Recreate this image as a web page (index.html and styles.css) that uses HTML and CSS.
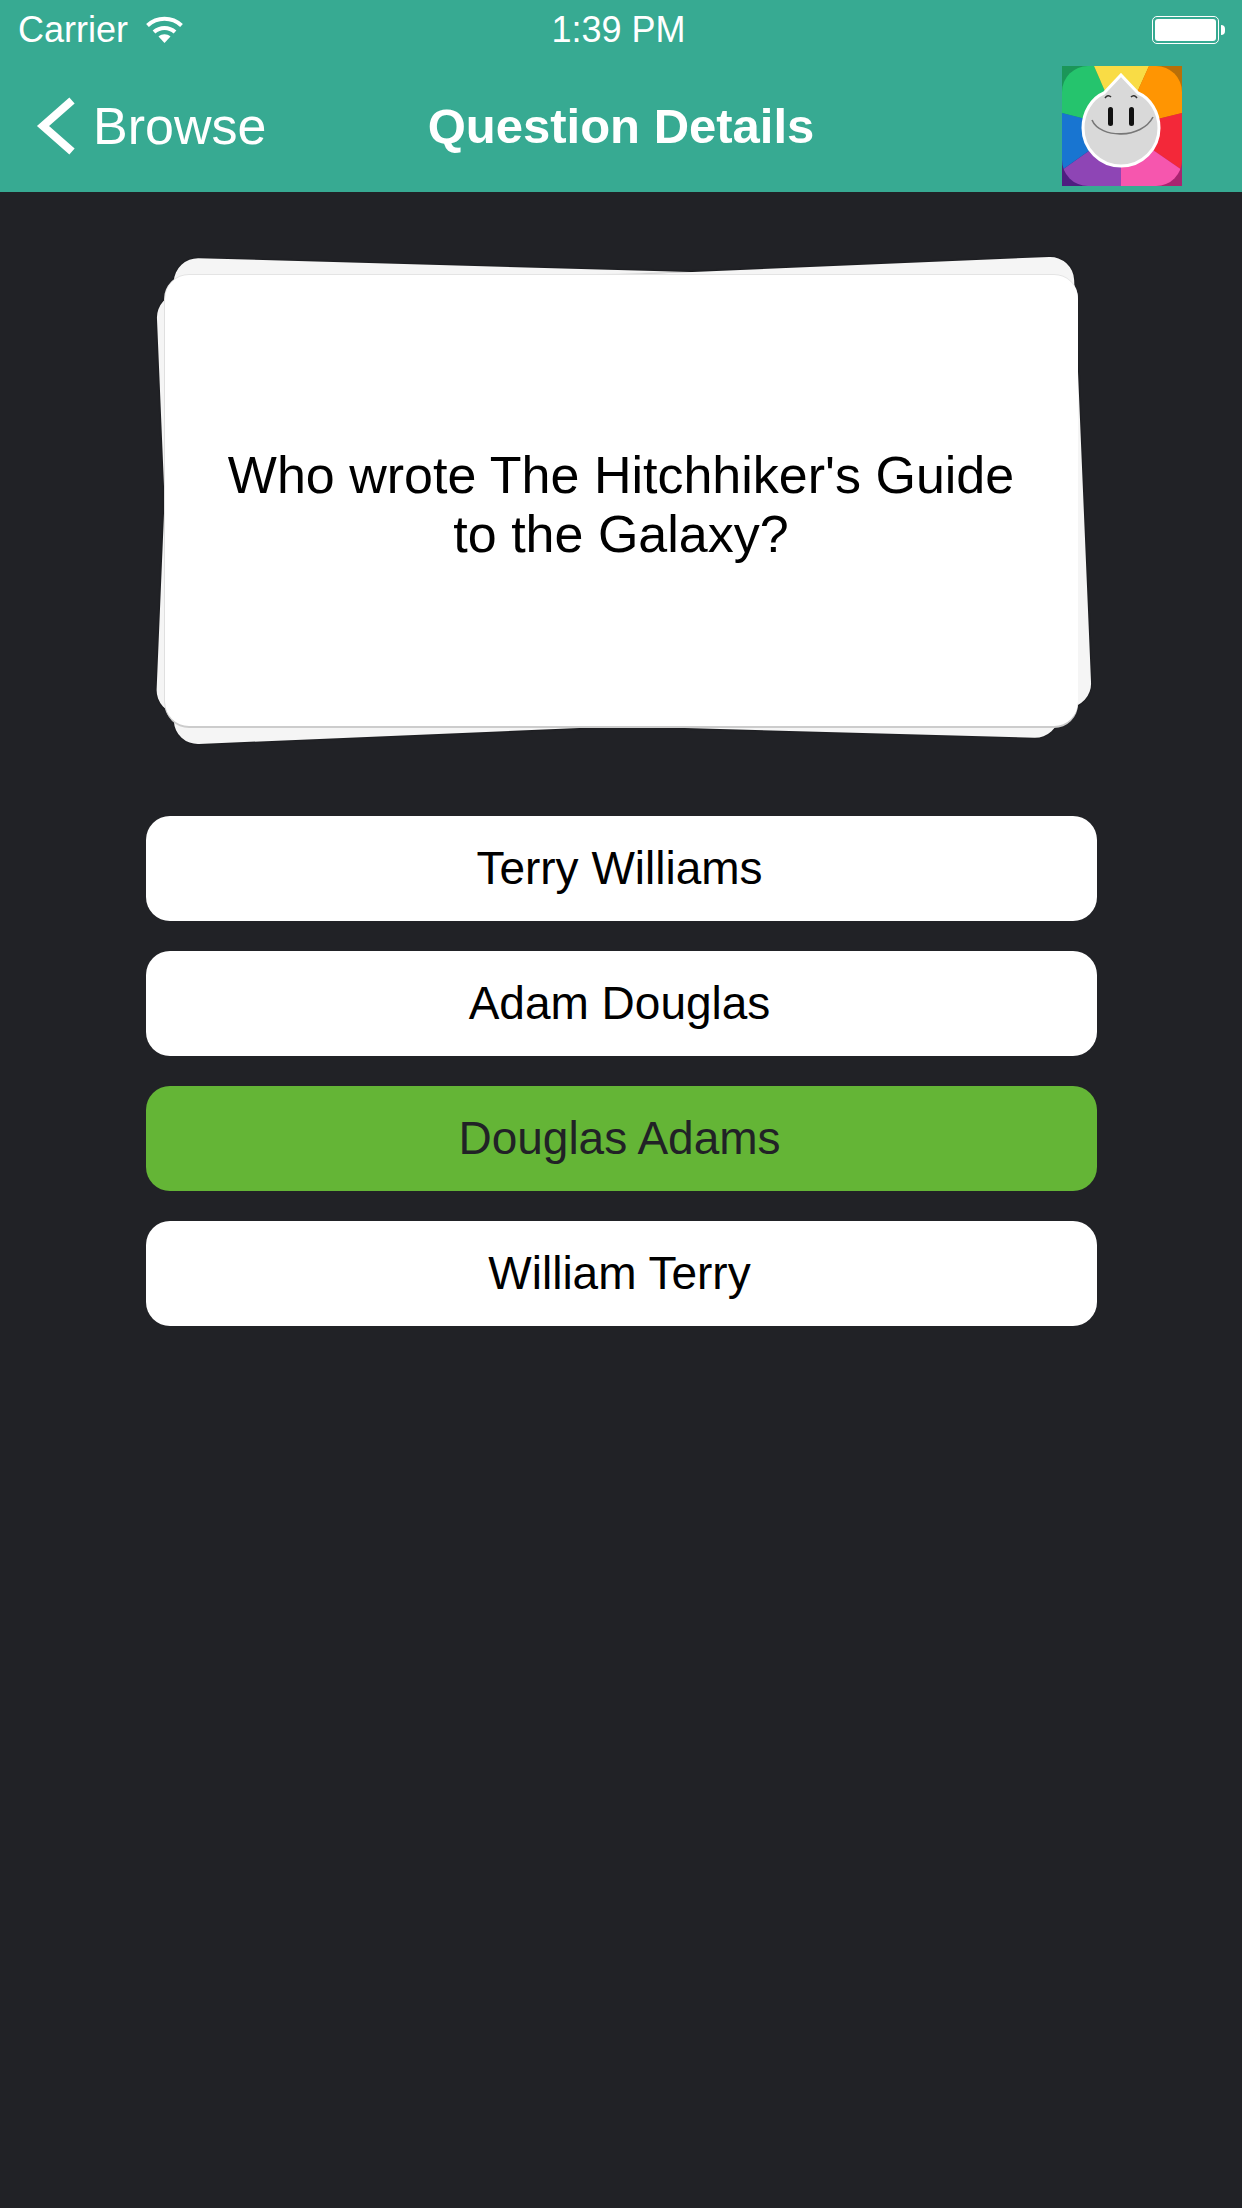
FILE: index.html
```html
<!DOCTYPE html>
<html lang="en">
<head>
    <meta charset="UTF-8">
    <meta name="viewport" content="width=device-width, initial-scale=1.0">
    <title>Question Details</title>
    <link rel="stylesheet" href="styles.css">
</head>
<body>
    <header class="app-header">
        <div class="status-bar">
            <div class="status-left">
                <span>Carrier</span>
                <svg class="wifi-icon" viewBox="0 0 37 27" width="37" height="27">
                    <path d="M1.5 9.5C11 .5 26 .5 35.5 9.5" fill="none" stroke="#fff" stroke-width="4"/>
                    <path d="M8 16C14 10.5 23 10.5 29 16" fill="none" stroke="#fff" stroke-width="4"/>
                    <path d="M12.5 20.5C16 17.5 21 17.5 24.5 20.5L18.5 27Z" fill="#fff"/>
                </svg>
            </div>
            <div class="status-time">1:39 PM</div>
            <div class="status-right">
                <div class="battery"><div class="battery-fill"></div></div>
                <div class="battery-nub"></div>
            </div>
        </div>
        <nav class="nav-bar">
            <a class="back-link" href="#">
                <svg class="back-icon" viewBox="0 0 42 62" width="42" height="62">
                    <path d="M36 5.5L7 31L36 56.5" fill="none" stroke="#fff" stroke-width="8"/>
                </svg>
                <span>Browse</span>
            </a>
            <h1 class="nav-title">Question Details</h1>
            <div class="nav-right">
                <svg class="app-logo" viewBox="0 0 120 120" width="120" height="120">
                    <defs>
                        <clipPath id="logo-clip"><rect width="120" height="120" rx="26"/></clipPath>
                    </defs>
                    <!-- darker colours show in the square corners -->
                    <rect x="0" y="0" width="60" height="60" fill="#1b9658"/>
                    <rect x="60" y="0" width="60" height="60" fill="#b86f08"/>
                    <rect x="0" y="60" width="60" height="60" fill="#4e1f80"/>
                    <rect x="60" y="60" width="60" height="60" fill="#a92470"/>
                    <g clip-path="url(#logo-clip)">
                        <polygon points="59,62 32,0 0,0 0,47" fill="#25c46d"/>
                        <polygon points="59,62 32,0 87,0" fill="#f9dc45"/>
                        <polygon points="59,62 87,0 120,0 120,47" fill="#ff9502"/>
                        <polygon points="59,62 120,47 120,104" fill="#f32839"/>
                        <polygon points="59,62 120,104 120,120 59,120" fill="#f656ae"/>
                        <polygon points="59,62 59,120 0,120 0,104" fill="#8e45b5"/>
                        <polygon points="59,62 0,104 0,47" fill="#1875d1"/>
                    </g>
                    <path d="M59 9L76 27C88 32 97 46 97 62C97 83 80 100 59 100C38 100 21 83 21 62C21 46 30 32 42 27Z" fill="#d9d9d9" stroke="#fff" stroke-width="3"/>
                    <rect x="46" y="41" width="5" height="19" rx="2.5" fill="#111"/>
                    <rect x="67" y="41" width="5" height="19" rx="2.5" fill="#111"/>
                    <path d="M30 54C38 73 80 73 91 51" fill="none" stroke="#777" stroke-width="1.6"/>
                    <path d="M43 32Q46 28 49 31M69 31Q72 28 75 32" fill="none" stroke="#333" stroke-width="1.6"/>
                </svg>
            </div>
        </nav>
    </header>

    <main class="content">
        <section class="card-stack">
            <div class="back-card back-card-left"></div>
            <div class="back-card back-card-right"></div>
            <div class="question-card">Who wrote The Hitchhiker's Guide<br>to the Galaxy?</div>
        </section>
        <ul class="answers">
            <li class="answer">Terry Williams</li>
            <li class="answer">Adam Douglas</li>
            <li class="answer answer-correct">Douglas Adams</li>
            <li class="answer">William Terry</li>
        </ul>
    </main>
</body>
</html>
```
FILE: styles.css
```css
* {
    box-sizing: border-box;
}

html,
body {
    height: 100%;
}

body {
    margin: 0;
    background-color: #212226;
    color: #000;
    font-family: "Liberation Sans", Arial, sans-serif;
}

.app-header {
    height: 192px;
    background-color: #37aa92;
    color: #fff;
}

.status-bar {
    height: 60px;
    padding: 0 17px 0 18px;
    display: grid;
    grid-template-columns: 1fr auto 1fr;
    align-items: center;
    font-size: 36px;
}

.status-left {
    display: flex;
    align-items: center;
    gap: 18px;
}

.wifi-icon {
    margin-top: -1px;
}

.status-time {
    padding-right: 6px;
}

.status-right {
    display: flex;
    align-items: center;
    justify-content: flex-end;
}

.battery {
    width: 67px;
    height: 28px;
    padding: 2px;
    border: 1px solid #fff;
    border-radius: 5px;
}

.battery-fill {
    height: 100%;
    background-color: #fff;
    border-radius: 3px;
}

.battery-nub {
    width: 4px;
    height: 10px;
    margin-left: 2px;
    background-color: #fff;
    border-radius: 0 5px 5px 0;
}

.nav-bar {
    height: 132px;
    padding: 0 36px;
    display: grid;
    grid-template-columns: 1fr auto 1fr;
    align-items: center;
}

.back-link {
    display: flex;
    align-items: center;
    gap: 15px;
    color: #fff;
    font-size: 52px;
    text-decoration: none;
}

.nav-title {
    margin: 0;
    font-size: 49px;
    font-weight: bold;
}

.nav-right {
    display: flex;
    justify-content: flex-end;
    padding-right: 24px;
}

.app-logo {
    display: block;
}

.content {
    padding-top: 83px;
    display: flex;
    flex-direction: column;
    align-items: center;
}

.card-stack {
    position: relative;
    width: 913px;
    height: 451px;
}

.back-card {
    position: absolute;
    background-color: #f5f5f5;
    border-radius: 24px;
    box-shadow: 0 0 2px rgba(0, 0, 0, 0.4);
}

.back-card-left {
    width: 903px;
    height: 456px;
    left: 0;
    top: -5px;
    transform: rotate(1.6deg) skewX(-0.8deg);
}

.back-card-right {
    width: 918px;
    height: 451px;
    left: 0;
    top: 0;
    transform: rotate(-2.4deg);
}

.question-card {
    position: relative;
    height: 100%;
    padding: 8px 20px 0;
    display: flex;
    align-items: center;
    justify-content: center;
    text-align: center;
    background-color: #fff;
    border-radius: 24px;
    box-shadow: 0 2px 0 #ccc, 0 -1px 0 #e4e4e4, -1px 0 0 #e0e0e0;
    font-size: 52px;
    line-height: 59px;
}

.answers {
    width: 951px;
    margin: 90px 0 0 1px;
    padding: 0;
    list-style: none;
    display: flex;
    flex-direction: column;
    gap: 30px;
}

.answer {
    height: 105px;
    padding: 0 4px 2px 0;
    display: flex;
    align-items: center;
    justify-content: center;
    background-color: #fff;
    border-radius: 24px;
    font-size: 46px;
}

.answer-correct {
    background-color: #64b536;
    color: #212226;
}
```
